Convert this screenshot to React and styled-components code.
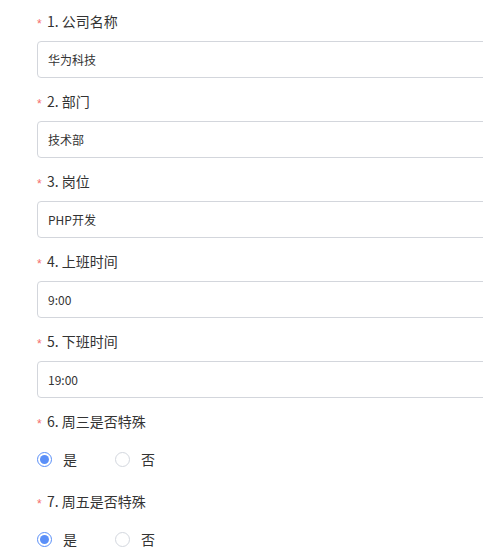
import React from 'react';
import styled, { createGlobalStyle } from 'styled-components';

const GlobalStyle = createGlobalStyle`
  html, body {
    margin: 0;
    padding: 0;
    background: #fff;
  }
  body {
    font-family: "Microsoft YaHei", "Noto Sans CJK SC", "Liberation Sans", sans-serif;
  }
`;

const Page = styled.div`
  width: 483px;
  overflow: hidden;
`;

const Form = styled.form`
  display: flex;
  flex-direction: column;
  padding: 10px 0 0 37px;
`;

const Field = styled.div`
  display: flex;
  flex-direction: column;
  height: 80px;
`;

const Label = styled.div`
  display: flex;
  align-items: center;
  height: 22px;
  font-size: 14px;
  color: #333;
  line-height: 22px;
`;

const Star = styled.span`
  color: #f56c6c;
  font-family: "Liberation Sans", sans-serif;
  font-size: 12px;
  width: 10px;
  line-height: 12px;
  transform: translateY(3px);
`;

const Input = styled.input`
  box-sizing: border-box;
  margin-top: 9px;
  width: 500px;
  flex-shrink: 0;
  height: 37px;
  border: 1px solid #d3d6dc;
  border-radius: 4px;
  padding: 0 10px;
  font-family: inherit;
  font-size: 12px;
  color: #333;
  outline: none;
  background: #fff;
`;

const RadioGroup = styled.div`
  display: flex;
  align-items: center;
  margin-top: 17px;
`;

const RadioItem = styled.label`
  display: flex;
  align-items: center;
  width: 78px;
  font-size: 14px;
  color: #333;
`;

const Circle = styled.span`
  box-sizing: border-box;
  width: 15px;
  height: 15px;
  border-radius: 50%;
  border: 1px solid ${p => (p.$checked ? '#5a8ff8' : '#d3d7de')};
  display: flex;
  align-items: center;
  justify-content: center;
  margin-right: 11px;
  &::after {
    content: '';
    width: 9px;
    height: 9px;
    border-radius: 50%;
    background: ${p => (p.$checked ? '#5a8ff8' : 'transparent')};
  }
`;

const textFields = [
  ['1. 公司名称', '华为科技'],
  ['2. 部门', '技术部'],
  ['3. 岗位', 'PHP开发'],
  ['4. 上班时间', '9:00'],
  ['5. 下班时间', '19:00'],
];

const radioFields = ['6. 周三是否特殊', '7. 周五是否特殊'];

export default function App() {
  return (
    <Page>
      <GlobalStyle />
      <Form>
        {textFields.map(([label, value]) => (
          <Field key={label}>
            <Label><Star>*</Star>{label}</Label>
            <Input defaultValue={value} readOnly />
          </Field>
        ))}
        {radioFields.map(label => (
          <Field key={label}>
            <Label><Star>*</Star>{label}</Label>
            <RadioGroup>
              <RadioItem><Circle $checked />是</RadioItem>
              <RadioItem><Circle />否</RadioItem>
            </RadioGroup>
          </Field>
        ))}
      </Form>
    </Page>
  );
}
